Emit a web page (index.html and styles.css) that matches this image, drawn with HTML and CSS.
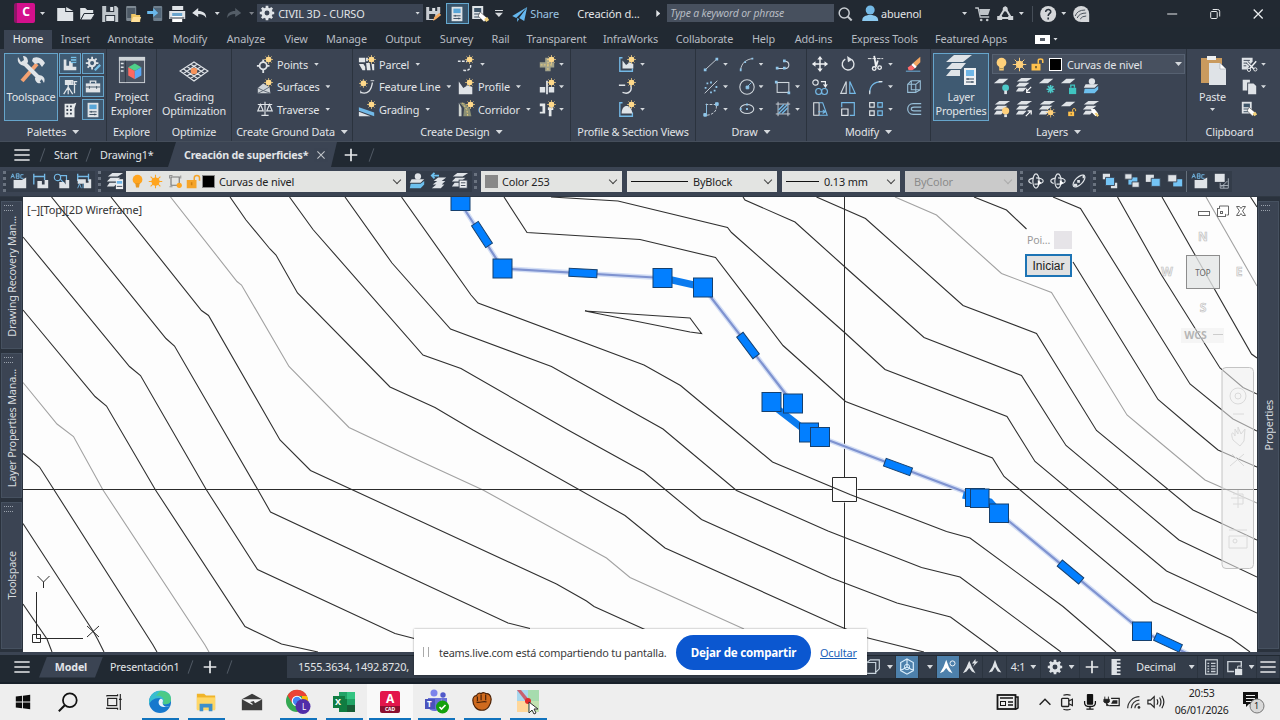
FILE: index.html
```html
<!DOCTYPE html>
<html lang="es">
<head>
    <meta charset="UTF-8">
    <meta name="viewport" content="width=device-width, initial-scale=1.0">
    <title>Civil 3D</title>
    <link rel="stylesheet" href="styles.css">
</head>
<body>
    <!-- Icon symbols -->
    <svg class="defs">
        <symbol id="new" viewBox="0 0 20 20"><path d="M2 4h8v4h8v9H2z M11 3l7 4h-7z" fill="#dfe3e7"/></symbol>
        <symbol id="open" viewBox="0 0 20 20"><path d="M3 16V4h5l2 2h6v3H7z" fill="#dfe3e7"/><path d="M7 9.500h11L14 16H3.500z" fill="#dfe3e7" stroke="#222933"/></symbol>
        <symbol id="save" viewBox="0 0 20 20"><path d="M2 2h14l2 2v14H2z" fill="#bfc5ca"/><path d="M6 2h8v6H6zM5 11h10v7H5z" fill="#2a323c"/><path d="M10 3h3v4h-3zM6 12h8v5H6z" fill="#dfe3e7"/></symbol>
        <symbol id="openm" viewBox="0 0 20 20"><rect x="4" y="2" width="10" height="15" rx="1" fill="#7e8993"/><rect x="5" y="4" width="8" height="10" fill="#4d5965"/><path d="M9 10h4l1 1h4v7H9z" fill="#f0c765"/><path d="M11 13h8l-2 5H9z" fill="#ffe09a"/></symbol>
        <symbol id="savem" viewBox="0 0 20 20"><rect x="8" y="2" width="9" height="15" rx="1" fill="#6e7e8c"/><rect x="9" y="4" width="7" height="10" fill="#536779"/><path d="M2 7h6V4l5 5-5 4v-3H2z" fill="#69b7ea"/></symbol>
        <symbol id="print" viewBox="0 0 20 20"><path d="M5 2h11v4H5zM2 7h16v8H2z" fill="#dfe3e7"/><path d="M5 11h10v7H5z" fill="#fff"/><path d="M5 9h10v3H5z" fill="#6aa4cc"/><path d="M3 14h14" stroke="#2a323c"/></symbol>
        <symbol id="undo" viewBox="0 0 20 20"><path d="M9 4L3 9l6 4v-3c4 0 6 1 8 4 0-5-3-7-8-7z" fill="#dfe3e7"/></symbol>
        <symbol id="redo" viewBox="0 0 20 20"><path d="M11 4l6 5-6 4v-3c-4 0-6 1-8 4 0-5 3-7 8-7z" fill="#545d67"/></symbol>
        <symbol id="gear" viewBox="0 0 20 20"><circle cx="10" cy="10" r="4.500" fill="none" stroke="#dfe3e7" stroke-width="3.500"/><path d="M10 2v3M10 15v3M2 10h3M15 10h3M4.300 4.300l2 2M13.700 13.700l2 2M15.700 4.300l-2 2M6.300 13.700l-2 2" stroke="#dfe3e7" stroke-width="3"/></symbol>
        <symbol id="saveas" viewBox="0 0 20 20"><path d="M2 3h14v6l-6 7H2z" fill="#c9cdd2"/><path d="M5 3h8v4H5zM5 10h6v5H5z" fill="#29313b"/><path d="M8 4h3v3H8z" fill="#dfe3e7"/><path d="M9 17l1-4 5-4 2 2-5 4z" fill="#f2a85f"/></symbol>
        <symbol id="props" viewBox="0 0 20 20"><rect x="4" y="2" width="12" height="16" fill="#dfe3e7"/><rect x="6" y="4" width="8" height="5" fill="#58a6d8"/><path d="M6 12h8M6 15h8M8 11v2M12 14v2" stroke="#33475a"/></symbol>
        <symbol id="match" viewBox="0 0 20 20"><rect x="2" y="2" width="11" height="13" fill="#dfe3e7"/><rect x="4" y="4" width="7" height="4" fill="#3f566a"/><path d="M4 10h7M4 13h5" stroke="#33475a"/><path d="M10 8l7 6-3 4-6-6z" fill="#fff" stroke="#333" stroke-width=".6"/><path d="M14 15l3-2 2 3-3 2z" fill="#f4d27a"/></symbol>
        <symbol id="plane" viewBox="0 0 20 20"><path d="M18 3L3 12l4 2zM18 3l-3 14-5-3zM8 14v4l2-3z" fill="#65b7ee"/></symbol>
        <symbol id="search" viewBox="0 0 20 20"><circle cx="9" cy="9" r="5" fill="none" stroke="#c5cacf" stroke-width="1.500"/><path d="M12.500 12.500l4 4" stroke="#c5cacf" stroke-width="2"/></symbol>
        <symbol id="user" viewBox="0 0 20 20"><circle cx="10" cy="6" r="4.500" fill="#74b9e6"/><path d="M2 17c0-4 2-5 6-6h4c4 1 6 2 6 6z" fill="#8cc9ef"/></symbol>
        <symbol id="cart" viewBox="0 0 20 20"><path d="M2 4h3l2 9h9" fill="none" stroke="#bfc4c9" stroke-width="1.300"/><path d="M6 5h11l-2 6H7z" fill="#bfc4c9"/><circle cx="8" cy="16" r="1.300" fill="#bfc4c9"/><circle cx="14" cy="16" r="1.300" fill="#bfc4c9"/></symbol>
        <symbol id="adsk" viewBox="0 0 20 20"><path d="M10 4L4 14h12z" fill="none" stroke="#cfd3d7" stroke-width="2"/><circle cx="10" cy="5" r="2.500" fill="#cfd3d7"/><path d="M2 12h5v4H2zM13 12h5v4h-5z" fill="#cfd3d7"/></symbol>
        <symbol id="help" viewBox="0 0 20 20"><circle cx="10" cy="10" r="8" fill="#d5d7da"/><path d="M7.500 8c0-3.500 5.500-3 5 0-.3 1.500-2.500 1.500-2.500 4M10 13.500v2" fill="none" stroke="#2a323c" stroke-width="1.600"/></symbol>
        <symbol id="badge" viewBox="0 0 20 20"><path d="M18 18h-8A8 8 0 1 1 18 10z" fill="#d5d7da"/><path d="M4 12q2-6 10-6M6 14q2-5 9-5M9 15q2-3 6-3" fill="none" stroke="#4a525c"/></symbol>
        <symbol id="min" viewBox="0 0 20 20"><path d="M5 10h10" stroke="#e6e8ea"/></symbol>
        <symbol id="rest" viewBox="0 0 20 20"><rect x="5.500" y="7.500" width="6.500" height="7" rx="1" fill="none" stroke="#e6e8ea"/><path d="M7.500 5.500h5q2 0 2 2v5" fill="none" stroke="#e6e8ea"/></symbol>
        <symbol id="close" viewBox="0 0 20 20"><path d="M5.500 5.500l9 9M14.500 5.500l-9 9" stroke="#e6e8ea" stroke-width="1.300"/></symbol>
        <symbol id="burger" viewBox="0 0 20 20"><path d="M1.500 4.500h17M1.500 10h17M1.500 15.500h17" stroke="#e6e8ea" stroke-width="1.700"/></symbol>
        <symbol id="plus" viewBox="0 0 20 20"><path d="M3 10h14M10 3v14" stroke="#e6e8ea" stroke-width="1.900"/></symbol>

        <symbol id="star" viewBox="0 0 10 10"><path d="M5 0v10M0 5h10M1.500 1.500l7 7M8.500 1.500l-7 7" stroke="#f3cf86" stroke-width=".8"/><circle cx="5" cy="5" r="3.100" fill="#ffd98a"/></symbol>
        <symbol id="tools" viewBox="0 0 32 32"><path d="M7 27L22 10" stroke="#f4a272" stroke-width="4"/><path d="M18 4c5-2 9 0 12 5l-3 4-3-4-4 1-3-3z" fill="#dfe3e7"/><path d="M8 8l18 18" stroke="#dfe3e7" stroke-width="4"/><path d="M3 3c-1 5 1 8 7 9l3-4c0-4-2-6-5-6l1 4-3 2zM29 29c2-5-1-8-6-8l-3 3c0 4 3 6 6 5l-2-3 2-2z" fill="#dfe3e7"/></symbol>
        <symbol id="psp" viewBox="0 0 20 20"><path d="M3 5h3v7h3V7h4v6h4v4H3z" fill="#dfe3e7"/><path d="M11 2h6v7h-6z" fill="#76bfe6"/><path d="M11 4h6M11 7h6" stroke="#3b4f60"/></symbol>
        <symbol id="pset" viewBox="0 0 20 20"><circle cx="9" cy="9" r="3.500" fill="none" stroke="#dfe3e7" stroke-width="2.500"/><path d="M9 2v3M9 13v3M2 9h3M13 9h3M4 4l2 2M14 4l-2 2M6 12l-2 2" stroke="#dfe3e7" stroke-width="2"/><path d="M12 17l6-6" stroke="#76bfe6" stroke-width="2.500"/></symbol>
        <symbol id="survey" viewBox="0 0 20 20"><path d="M5 3h8v4H5zM15 4v13M8 7v4M8 10l-5 8M8 10l5 8M8 9v9M14 4h4M14 7h3" fill="none" stroke="#dfe3e7" stroke-width="1.400"/><path d="M5 3h7v4H5z" fill="#dfe3e7"/></symbol>
        <symbol id="case" viewBox="0 0 20 20"><path d="M7 6V3.500h6V6" fill="none" stroke="#dfe3e7" stroke-width="1.500"/><path d="M2 6h16v10H2z" fill="#dfe3e7"/><path d="M2 10h16M6 9v3M14 9v3" stroke="#3b4f60"/></symbol>
        <symbol id="panorama" viewBox="0 0 20 20"><path d="M4 3h10l3-1-2 6v10H4z" fill="#e7eaec"/><path d="M6 5h2v2H6zM10 5h2v2h-2zM6 9h2v2H6zM10 9h2v2h-2zM6 13h2v2H6zM10 13h2v2h-2z" fill="#3b4453"/></symbol>
        <symbol id="explorer" viewBox="0 0 30 30"><rect x="1.500" y="1.500" width="27" height="27" fill="#4b5462" stroke="#cfd4d8"/><path d="M1 1h28v4H1z" fill="#cfd4d8"/><path d="M3 8h3M3 12h3M3 16h3" stroke="#dfe3e7" stroke-width="1.500"/><path d="M8 5v23" stroke="#2e3744"/><path d="M18 8l7 4-7 4-7-4z" fill="#4fd08a"/><path d="M11 12l7 4v9l-7-4z" fill="#ff6961"/><path d="M25 12l-7 4v9l7-4z" fill="#5aa8f7"/></symbol>
        <symbol id="grade" viewBox="0 0 30 22"><path d="M15 1L29 10 15 20 1 10zM8 5.500L22 15M11.500 3L25.500 12.500M4.500 8L18.500 17.500M22 5.500L8 15M18.500 3L4.500 12.500M25.500 8L11.500 17.500" fill="none" stroke="#dfe3e7" stroke-width="1.200"/><circle cx="15" cy="10" r="3.300" fill="#f5925c"/></symbol>
        <symbol id="points" viewBox="0 0 20 20"><circle cx="8" cy="12" r="4" fill="none" stroke="#dfe3e7" stroke-width="2"/><path d="M8 5v3M8 16v4M1 12h3M12 12h3" stroke="#dfe3e7" stroke-width="2"/><use href="#star" x="9" y="0" width="10" height="10"/></symbol>
        <symbol id="surf" viewBox="0 0 20 20"><path d="M2 11l6-5 7 4 1 7H2z" fill="#cfd4d8"/><path d="M2 11l6 3 7-4M8 14l-6 3M8 14l8 3" stroke="#59636f" fill="none"/><use href="#star" x="9" y="0" width="10" height="10"/></symbol>
        <symbol id="trav" viewBox="0 0 20 20"><path d="M2 5h16M10 2v15M6 17h8M5 5l-3 7h6zM15 5l-3 7h6z" fill="none" stroke="#dfe3e7" stroke-width="1.300"/></symbol>
        <symbol id="parcel" viewBox="0 0 20 20"><path d="M1 3h7v5H1zM1 10h5l2 3v4H5zM9 9h4l1 8h-4zM15 10h3v7h-2zM9 3h2v4H9z" fill="#e4e7e9"/><use href="#star" x="10" y="0" width="10" height="10"/></symbol>
        <symbol id="fline" viewBox="0 0 20 20"><path d="M3 16c8 3 12-3 13-11" fill="none" stroke="#dfe3e7" stroke-width="1.500"/><path d="M14 3h4M3 14v3" stroke="#dfe3e7"/><use href="#star" x="1" y="1" width="10" height="10"/></symbol>
        <symbol id="gra" viewBox="0 0 20 20"><path d="M1 8l17 6v4L1 12z" fill="#71b9e8"/><path d="M1 13l13 5H1z" fill="#dfe3e7"/><use href="#star" x="10" y="0" width="10" height="10"/></symbol>
        <symbol id="align" viewBox="0 0 20 20"><path d="M1 7h10M7 17c6 1 9-2 8-7" fill="none" stroke="#dfe3e7" stroke-width="1.600" stroke-dasharray="3 1.500"/><use href="#star" x="9" y="0" width="10" height="10"/></symbol>
        <symbol id="profile" viewBox="0 0 20 20"><path d="M2 4l5 7 5-3 5 2v8H2z" fill="#dfe3e7"/><use href="#star" x="9" y="0" width="10" height="10"/></symbol>
        <symbol id="corr" viewBox="0 0 20 20"><path d="M3 3h5l6 6 2 9H7L8 9z" fill="#8b9075"/><path d="M2 3l3 6v9H2z" fill="#cfd4d0"/><path d="M6 3l5 8 1 7" fill="none" stroke="#f4d27a" stroke-dasharray="2 1.500"/><use href="#star" x="10" y="0" width="10" height="10"/></symbol>
        <symbol id="inter" viewBox="0 0 20 20"><path d="M8 3h6v5h4v6h-4v4H8v-4H2V8h6z" fill="#a3a38b"/><path d="M3 11h14M11 4v14" stroke="#f4d27a" stroke-dasharray="2 1.500"/><use href="#star" x="10" y="0" width="10" height="10"/></symbol>
        <symbol id="assem" viewBox="0 0 20 20"><path d="M2 10h6v6H2zM12 10h6v6h-6z" fill="#dfe3e7"/><path d="M10 3v15" stroke="#dfe3e7" stroke-width="2"/><use href="#star" x="10" y="0" width="10" height="10"/></symbol>
        <symbol id="pipe" viewBox="0 0 20 20"><path d="M2 4h6v11H2v-2h3V7H2zM11 8h6v3h-2v7h-3v-7h-1z" fill="#e4e7e9"/><use href="#star" x="10" y="0" width="10" height="10"/></symbol>
        <symbol id="pview" viewBox="0 0 20 20"><path d="M5 3H2v15h14v-3" fill="none" stroke="#74b9e6" stroke-width="1.500"/><path d="M5 6l4 5 4-3 4 2v5H5z" fill="#dfe3e7"/><use href="#star" x="10" y="0" width="10" height="10"/></symbol>
        <symbol id="sline" viewBox="0 0 20 20"><path d="M1 8h7M5 16c8 3 11-3 9-8" fill="none" stroke="#dfe3e7" stroke-width="1.600"/><use href="#star" x="10" y="0" width="10" height="10"/></symbol>
        <symbol id="sview" viewBox="0 0 20 20"><path d="M5 3H2v15h14v-4" fill="none" stroke="#74b9e6" stroke-width="1.500"/><path d="M4 15c0-11 11-11 12 0z" fill="#dfe3e7"/><use href="#star" x="10" y="0" width="10" height="10"/></symbol>

        <symbol id="line" viewBox="0 0 20 20"><path d="M4 16L17 4" stroke="#cfd6dc"/><path d="M2 15h3v3H2zM15 3h3v3h-3z" fill="#8fc6ea"/></symbol>
        <symbol id="arc" viewBox="0 0 20 20"><path d="M3 16C4 9 9 5 16 4" fill="none" stroke="#cfd6dc"/><path d="M2 15h2v3H2zM7 7h2v2H7zM15 3h2v2h-2z" fill="#8fc6ea"/></symbol>
        <symbol id="pline" viewBox="0 0 20 20"><path d="M3 15h9c6 0 6-8 0-8" fill="none" stroke="#cfd6dc" stroke-width="1.200"/><path d="M2 13h3v3H2zM10 13h3v3h-3zM10 5h3v3h-3z" fill="#8fc6ea"/></symbol>
        <symbol id="pts" viewBox="0 0 20 20"><path d="M3 17L17 3" stroke="#cfd6dc"/><path d="M5 5h2v2H5zM9 4h2v2H9zM3 10h2v2H3zM13 13h2v2h-2zM9 15h2v2H9zM15 9h2v2h-2z" fill="#8fc6ea"/></symbol>
        <symbol id="circle" viewBox="0 0 20 20"><circle cx="10" cy="10" r="8" fill="none" stroke="#cfd6dc" stroke-width="1.200"/><path d="M10 10l5-5M9 9h3v3H9z" stroke="#8fc6ea" fill="#8fc6ea"/></symbol>
        <symbol id="rect" viewBox="0 0 20 20"><rect x="3.500" y="5" width="13" height="11" fill="none" stroke="#cfd6dc" stroke-width="1.200"/><path d="M1 3h3v3H1zM15 15h3v3h-3z" fill="#8fc6ea"/></symbol>
        <symbol id="curve" viewBox="0 0 20 20"><path d="M4 5h12v3c0 5-5 9-12 9" fill="none" stroke="#cfd6dc" stroke-dasharray="3 1.500"/><path d="M15 3h3v3h-3zM2 15h3v3H2zM5 4v11" fill="#8fc6ea" stroke="#8fc6ea"/></symbol>
        <symbol id="ell" viewBox="0 0 20 20"><ellipse cx="10" cy="10" rx="7.500" ry="5" fill="none" stroke="#cfd6dc" stroke-width="1.200"/><path d="M9 9h2v2H9zM2 9h2v2H2zM9 4h2v2H9z" fill="#8fc6ea"/></symbol>
        <symbol id="hatch" viewBox="0 0 20 20"><path d="M2 4.500h16M2 15.500h16M4.500 2v16M15.500 2v16" stroke="#cfd6dc"/><path d="M5 11l6-6M5 15L15 5M9 15l6-6" stroke="#74b9e6" stroke-width="1.500"/></symbol>
        <symbol id="move" viewBox="0 0 20 20"><path d="M10 3v14M3 10h14" stroke="#eef0f2" stroke-width="1.600"/><path d="M10 1l3 4H7zM10 19l3-4H7zM1 10l4-3v6zM19 10l-4-3v6z" fill="#eef0f2"/></symbol>
        <symbol id="rot" viewBox="0 0 20 20"><path d="M7 4.500A6.500 6.500 0 1 0 14 5" fill="none" stroke="#dfe3e7" stroke-width="1.500"/><path d="M9 1l6 4-5 3z" fill="#dfe3e7"/></symbol>
        <symbol id="trim" viewBox="0 0 20 20"><path d="M1 4h17" stroke="#eef0f2" stroke-dasharray="4 1"/><path d="M8 1l2 12M12 6l-2 7" stroke="#eef0f2" stroke-width="2"/><circle cx="8" cy="15" r="2" fill="none" stroke="#eef0f2" stroke-width="1.500"/><circle cx="14" cy="14" r="2" fill="none" stroke="#eef0f2" stroke-width="1.500"/></symbol>
        <symbol id="erase" viewBox="0 0 20 20"><path d="M9 9l8-7v6l-5 5z" fill="#f4a763"/><path d="M9 9l4 4-2 2-4-4z" fill="#fff"/><path d="M3 14l4-3 4 4-3 2H4z" fill="#ff6b6b"/><path d="M1 18h16" stroke="#74b9e6"/></symbol>
        <symbol id="copy" viewBox="0 0 20 20"><circle cx="5" cy="5" r="3" fill="none" stroke="#dfe3e7" stroke-width="1.300"/><circle cx="8.500" cy="15" r="3.300" fill="none" stroke="#74b9e6" stroke-width="1.300"/><circle cx="15" cy="15" r="3.300" fill="none" stroke="#74b9e6" stroke-width="1.300"/><path d="M11 4h5v5M14 7l2 3 2-3" fill="none" stroke="#eef0f2" stroke-width="1.300"/></symbol>
        <symbol id="mirror" viewBox="0 0 20 20"><path d="M8 4v13H2z" fill="none" stroke="#cfd6dc" stroke-width="1.300"/><path d="M12 4v13h6z" fill="none" stroke="#74b9e6" stroke-width="1.300"/></symbol>
        <symbol id="fillet" viewBox="0 0 20 20"><path d="M3 17c0-8 4-13 14-13" fill="none" stroke="#74b9e6" stroke-width="1.300"/><path d="M3 18v-4M13 4h4" stroke="#dfe3e7" stroke-width="1.300"/></symbol>
        <symbol id="box" viewBox="0 0 20 20"><path d="M3 7h9v9H3zM7 3h10v10M3 7l4-4M12 7l5-4M12 16l5-3M7 3v10h10" fill="none" stroke="#98bfd8" stroke-width="1.200"/></symbol>
        <symbol id="stretch" viewBox="0 0 20 20"><path d="M3 3h6v14H3z" fill="none" stroke="#dfe3e7" stroke-width="1.200"/><path d="M9 3h4l5 14H9M8 13h7M13 11l3 2-3 2" fill="none" stroke="#74b9e6" stroke-width="1.200"/></symbol>
        <symbol id="scale" viewBox="0 0 20 20"><path d="M3 10h7v7H3z" fill="none" stroke="#dfe3e7" stroke-width="1.300"/><path d="M3 8V3h14v14h-5" fill="none" stroke="#74b9e6" stroke-width="1.300"/></symbol>
        <symbol id="array" viewBox="0 0 20 20"><path d="M3 3h5v5H3zM3 12h5v5H3z" fill="none" stroke="#dfe3e7" stroke-width="1.300"/><path d="M12 3h5v5h-5zM12 12h5v5h-5z" fill="none" stroke="#74b9e6" stroke-width="1.300"/></symbol>
        <symbol id="offset" viewBox="0 0 20 20"><path d="M18 4H9c-8 0-8 12 0 12h9M18 8h-8c-4 0-4 4 0 4h8" fill="none" stroke="#98bfd8" stroke-width="1.300"/></symbol>

        <symbol id="lprops" viewBox="0 0 32 32"><path d="M9 1h18l-9 7H1zM7 9h14l-5 6H1zM6 16h9v6H1z" fill="#dfe3e7"/><path d="M19 14h12v17H19z" fill="#eef0f2"/><path d="M21 16h8v6h-8z" fill="#6fb6e6"/><path d="M21 25h8M21 28h8M23 24v2M27 27v2" stroke="#35485a"/></symbol>
        <symbol id="bulb" viewBox="0 0 20 20"><circle cx="10" cy="7.500" r="6.500" fill="#ffd07a"/><path d="M7 12h6v6H7z" fill="#ffd07a"/><path d="M7.500 15.500h5" stroke="#8a7a4c"/></symbol>
        <symbol id="sun" viewBox="0 0 20 20"><circle cx="10" cy="10" r="5" fill="#ffd07a"/><path d="M10 1v18M1 10h18M3.500 3.500l13 13M16.500 3.500l-13 13" stroke="#ffd07a" stroke-width="1.300"/></symbol>
        <symbol id="lock" viewBox="0 0 20 20"><path d="M11 9V5c0-3 6-3 6 0v3" fill="none" stroke="#ffc14d" stroke-width="2"/><rect x="2" y="9" width="12" height="9" fill="#ffc14d"/><path d="M8 12v3" stroke="#5a4b28" stroke-width="2"/></symbol>
        <symbol id="bulbo" viewBox="0 0 20 20"><circle cx="10" cy="7.500" r="6.500" fill="#ffa51f"/><path d="M7 12h6l-1 6H8z" fill="#e8971f"/></symbol>
        <symbol id="suno" viewBox="0 0 20 20"><circle cx="10" cy="10" r="5.500" fill="#ffa51f"/><path d="M10 1v18M1 10h18M3.500 3.500l13 13M16.500 3.500l-13 13" stroke="#ffa51f" stroke-width="1.400"/></symbol>
        <symbol id="vpo" viewBox="0 0 20 20"><path d="M4 4h11v11H4z" fill="none" stroke="#777" stroke-width="1.500"/><path d="M2 2h4M2 2v4M17 2v4M2 17h4" stroke="#777"/><circle cx="15" cy="15" r="3.500" fill="#ffa51f"/></symbol>
        <symbol id="locko" viewBox="0 0 20 20"><path d="M11 9V5c0-4 7-4 7 0v4" fill="none" stroke="#f5a42a" stroke-width="2"/><rect x="1" y="8" width="13" height="11" fill="#f5a42a"/><path d="M7.500 11v4" stroke="#cf7f10" stroke-width="2"/></symbol>
        <symbol id="lay" viewBox="0 0 20 20"><path d="M7 1h12l-6 4H2zM5 6.500h11l-5 4H1zM4 12h9l-4 4H1z" fill="#dfe3e7"/></symbol>
        <symbol id="lay1" viewBox="0 0 20 20"><path d="M7 2h10l-6 5H1z" fill="#dfe3e7"/></symbol>
        <symbol id="lOff" viewBox="0 0 20 20"><use href="#lay1"/><circle cx="14" cy="12" r="3.800" fill="#4cc9c9"/><path d="M12.500 15h3v4h-3z" fill="#dfe3e7"/></symbol>
        <symbol id="lIso" viewBox="0 0 20 20"><use href="#lay"/><path d="M18 11l-5 5M13 13v4h4" fill="none" stroke="#fff" stroke-width="1.300"/></symbol>
        <symbol id="lFrz" viewBox="0 0 20 20"><use href="#lay1"/><path d="M14 9v9M9.500 13.500h9M11 10l6 7M17 10l-6 7" stroke="#4cc9c9" stroke-width="1.700"/></symbol>
        <symbol id="lLck" viewBox="0 0 20 20"><use href="#lay1"/><path d="M10 12h8v7h-8z" fill="#3fc4c0"/><path d="M12 12V9h4v3" fill="none" stroke="#3fc4c0" stroke-width="1.500"/></symbol>
        <symbol id="lCur" viewBox="0 0 20 20"><path d="M4 8h14l-4 4H2z" fill="#dfe3e7"/><path d="M3 13h11l4-3v4l-4 4H2z" fill="#6dc0ee"/><circle cx="11" cy="5" r="3.500" fill="#dfe3e7"/></symbol>
        <symbol id="lOn" viewBox="0 0 20 20"><use href="#lay"/><circle cx="14" cy="12" r="4" fill="#ffd07a"/><path d="M12.500 16h3v3h-3z" fill="#dfe3e7"/></symbol>
        <symbol id="lUn" viewBox="0 0 20 20"><use href="#lay"/><path d="M12 18l5-5M14 12h4v4" fill="none" stroke="#fff" stroke-width="1.300"/></symbol>
        <symbol id="lThw" viewBox="0 0 20 20"><use href="#lay"/><use href="#sun" x="8" y="8" width="12" height="12"/></symbol>
        <symbol id="lUlk" viewBox="0 0 20 20"><use href="#lay1"/><use href="#lock" x="8" y="8" width="11" height="11"/></symbol>
        <symbol id="lMat" viewBox="0 0 20 20"><use href="#lay"/><path d="M10 10l4 0 4 5-3 3-4-4z" fill="#fff"/><path d="M14 15l2-1 3 3-2 2z" fill="#f4d27a"/></symbol>
        <symbol id="lPrev" viewBox="0 0 20 20"><path d="M9 6h9l-5 4H4zM8 10h9l-4 4H3zM7 14h9l-4 4H2z" fill="#dfe3e7"/><path d="M2 4h8M5 1L2 4l3 3" fill="none" stroke="#6dc0ee" stroke-width="2"/></symbol>
        <symbol id="lSt" viewBox="0 0 20 20"><use href="#lay"/><rect x="9" y="9" width="9" height="9" fill="#eef0f2" stroke="#3b4453"/><path d="M11 12h5M11 15h5" stroke="#3b4453"/></symbol>
        <symbol id="paste" viewBox="0 0 28 32"><rect x="2" y="4" width="21" height="25" fill="#c99a5e"/><path d="M8 2h9v4H8z" fill="#eef0f2"/><path d="M10 9h11l6 6v16H10z" fill="#dfe3e7"/><path d="M21 9v6h6z" fill="#fff" stroke="#8b929a" stroke-width=".5"/></symbol>
        <symbol id="cut" viewBox="0 0 20 20"><path d="M2 3h12v4l-6 9H2z" fill="#dfe3e7"/><path d="M4 6h7M4 9h4M4 12h3" stroke="#3b4453"/><path d="M8 8l8 8M18 7l-8 9" stroke="#3b4453" stroke-width="3"/><path d="M8 8l8 8M18 7l-8 9" stroke="#eef0f2" stroke-width="1.600"/><circle cx="10" cy="16.500" r="1.800" fill="#3b4453" stroke="#eef0f2"/><circle cx="17" cy="16" r="1.800" fill="#3b4453" stroke="#eef0f2"/></symbol>
        <symbol id="cpy" viewBox="0 0 20 20"><path d="M3 2h8v3H8v9H3z" fill="#dfe3e7"/><path d="M9 6h6l3 3v9H9z" fill="#dfe3e7"/></symbol>

        <symbol id="t1" viewBox="0 0 20 20"><path d="M4 9h9l5-3v12H4z" fill="#dfe3e7"/><path d="M1 7l2-5 2 5M2 5h2M7 2v5h3V2zM7 4.500h3M15 3h-3v4h3" fill="none" stroke="#74b9e6"/></symbol>
        <symbol id="t2" viewBox="0 0 20 20"><path d="M2 2v12M14 2v7M2 5h12" stroke="#74b9e6" stroke-width="1.500"/><path d="M6 10h5v4h3V9h4v9H6z" fill="#dfe3e7"/></symbol>
        <symbol id="t3" viewBox="0 0 20 20"><circle cx="5" cy="6" r="3.500" fill="none" stroke="#74b9e6" stroke-width="1.300"/><path d="M8 4h7v5M8 8l5 5" fill="none" stroke="#74b9e6" stroke-width="1.300"/><path d="M7 11h5l2 3V9h4v9H7z" fill="#dfe3e7"/></symbol>
        <symbol id="t4" viewBox="0 0 20 20"><path d="M3 2v8M15 2v8M3 5h12" stroke="#74b9e6" stroke-width="1.500"/><path d="M3 8h9v4h3V8h3v10h-8v-5H3z" fill="#dfe3e7"/><path d="M3 18l2-5 2 5M9 13v5" stroke="#74b9e6" fill="none"/></symbol>
        <symbol id="lp" viewBox="0 0 20 20"><use href="#lay"/><path d="M11 8h8v11h-8z" fill="#eef0f2"/><path d="M12 10h6v3h-6z" fill="#6fb6e6"/><path d="M12 16h6" stroke="#3b4453"/></symbol>
        <symbol id="orb" viewBox="0 0 20 20"><ellipse cx="10" cy="10" rx="3.500" ry="8" fill="none" stroke="#dfe3e7" stroke-width="1.300"/><ellipse cx="10" cy="10" rx="8" ry="3.500" fill="none" stroke="#dfe3e7" stroke-width="1.300" stroke-dasharray="11 3"/><path d="M12 9l4 3-4 3z" fill="#fff"/></symbol>
        <symbol id="orb2" viewBox="0 0 20 20"><ellipse cx="10" cy="10" rx="8.500" ry="4" transform="rotate(-45 10 10)" fill="none" stroke="#dfe3e7" stroke-width="1.300"/><path d="M8 9h3v3H8zM14 3h2v4h-2zM4 13h4v3H4z" fill="#dfe3e7"/></symbol>
        <symbol id="do1" viewBox="0 0 20 20"><path d="M2 2h8v6H2zM11 12h7v6h-7z" fill="#dfe3e7"/><path d="M5 6h10v9H5z" fill="#74c4f5" stroke="#3b4453"/></symbol>
        <symbol id="do2" viewBox="0 0 20 20"><path d="M6 6h10v8H6z" fill="#74c4f5"/><path d="M2 2h8v6H2zM10 11h8v6h-8z" fill="#dfe3e7" stroke="#3b4453"/></symbol>
        <symbol id="do3" viewBox="0 0 20 20"><path d="M2 3h9v8H2z" fill="#dfe3e7"/><path d="M8 7h10v9H8z" fill="#74c4f5" stroke="#3b4453"/></symbol>
        <symbol id="do4" viewBox="0 0 20 20"><path d="M8 8h10v8H8z" fill="#74c4f5"/><path d="M2 3h10v8H2z" fill="#dfe3e7" stroke="#3b4453"/></symbol>
        <symbol id="do5" viewBox="0 0 20 20"><path d="M2 2h11v9H2z" fill="#dfe3e7"/><path d="M8 12v6h9V7M9 17l7-7M12 18v-4M8 15h9" fill="none" stroke="#aeb6bf"/></symbol>

        <symbol id="cube" viewBox="0 0 20 20"><path d="M10 1l7 4v9l-7 4-7-4V5zM10 1v9M10 10l-7 4M10 10l7 4" fill="none" stroke="#dbeefc" stroke-width="1.300"/><circle cx="10" cy="10" r="3" fill="none" stroke="#dbeefc"/></symbol>
        <symbol id="osn" viewBox="0 0 20 20"><path d="M3 5h10v12H3zM3 5l4-3h10v10l-4 4" fill="none" stroke="#c9d4dd" stroke-width="1.300"/></symbol>
        <symbol id="ann" viewBox="0 0 20 20"><path d="M10 2l3 8 4 6-4-1-3-5-3 5-4 1 4-6z" fill="#dfe3e7"/></symbol>
        <symbol id="ann1" viewBox="0 0 20 20"><path d="M8 2l3 8 4 7-4-2-3-4-3 4-4 2 4-7z" fill="#fff"/><circle cx="15" cy="6" r="2.800" fill="none" stroke="#fff"/></symbol>
        <symbol id="ann2" viewBox="0 0 20 20"><path d="M8 3l3 7 4 7-4-2-3-4-3 4-4 2 4-7z" fill="#dfe3e7"/><path d="M15 1l-4 5h3l-2 4 6-6h-3z" fill="#dfe3e7"/></symbol>
        <symbol id="ruler" viewBox="0 0 20 20"><path d="M5 1h10v2h-4v2h4v2h-4v2h4v2h-4v2h4v2h-4v2h4v2H5z" fill="#dfe3e7"/></symbol>
        <symbol id="qp" viewBox="0 0 20 20"><rect x="4" y="2" width="13" height="16" fill="none" stroke="#c9d0d6" stroke-width="1.300"/><path d="M6 6h2M6 9h2M6 12h2M6 15h2M10 6h5M10 9h5M10 12h5M10 15h5" stroke="#c9d0d6" stroke-width="1.400"/></symbol>
        <symbol id="lui" viewBox="0 0 20 20"><path d="M9 15H2V4h15v5" fill="none" stroke="#c9d0d6" stroke-width="1.500"/><path d="M10 12h8v7h-8z" fill="#dfe3e7"/><path d="M13 12V9h4v2" fill="none" stroke="#dfe3e7"/></symbol>

        <symbol id="win" viewBox="0 0 20 20"><path d="M2 4l7-1v6.500H2zM10 3l8-1v7.500h-8zM2 10.500h7V17l-7-1zM10 10.500h8V18l-8-1z" fill="#0d0d0d"/></symbol>
        <symbol id="wsearch" viewBox="0 0 24 24"><circle cx="14" cy="10" r="7.500" fill="none" stroke="#111" stroke-width="1.900"/><path d="M8.500 15.500L2 22" stroke="#111" stroke-width="2.200"/></symbol>
        <symbol id="task" viewBox="0 0 20 20"><rect x="3" y="6" width="10" height="8" fill="none" stroke="#222" stroke-width="1.300"/><path d="M2 4V2.500M2 3h12V1.500M2 16v1h12v1.500M17 1v18M15.500 7h3" fill="none" stroke="#222" stroke-width="1.300"/></symbol>
        <symbol id="edge" viewBox="0 0 24 24"><circle cx="12" cy="12" r="11" fill="#1778cd"/><path d="M1 11C3-3 23-2 23 9c0 5-5 6-9 5 2-2 1-6-3-6C6 8 2 11 1 15z" fill="#38bdd0"/><path d="M12 1c8 0 11 4 11 8 0 5-5 6-8 5 3-8-4-9-7-8z" fill="#55d066" opacity=".7"/><path d="M12 9c-3 3-1 8 4 8 3 0 5 0 6-1-3 2-9 0-7-5 0-1-1-3-3-2z" fill="#eaf4fb"/></symbol>
        <symbol id="folder" viewBox="0 0 24 24"><path d="M2 3h8l2 2h10v15H2z" fill="#f0b429"/><path d="M2 7h20v14H2z" fill="#ffd766"/><path d="M5 14h14v8h-4v-4H9v4H5z" fill="#3e8fcb"/></symbol>
        <symbol id="mail" viewBox="0 0 26 20"><path d="M2 7l11-6 11 6v12H2z" fill="#3c3c3c"/><path d="M2 7h22l-11 6z" fill="#f2f2f2"/><path d="M11 10l7 5-3-6z" fill="#3c3c3c"/></symbol>
        <symbol id="chrome" viewBox="0 0 26 26"><circle cx="12" cy="12" r="11" fill="#34a853"/><path d="M2.500 6.500A11 11 0 0 1 22 7H12L7 14z" fill="#ea4335"/><path d="M22 7a11 11 0 0 1-10 16l5-8V7z" fill="#fbbc05"/><circle cx="12" cy="12" r="5.300" fill="#fff"/><circle cx="12" cy="12" r="4.200" fill="#4285f4"/><circle cx="18" cy="17.500" r="7.500" fill="#512da8"/></symbol>
        <symbol id="excel" viewBox="0 0 24 22"><path d="M7 1h16v20H7z" fill="#21a366"/><path d="M15 1h8v7h-8z" fill="#33c481"/><path d="M7 8h8v13H7z" fill="#107c41"/><path d="M15 14h8v7h-8z" fill="#185c37"/><rect x="1" y="5" width="12" height="12" fill="#107c41"/></symbol>
        <symbol id="teams" viewBox="0 0 26 26"><circle cx="11" cy="4" r="3.500" fill="#7b83eb"/><circle cx="20" cy="6" r="2.700" fill="#5059c9"/><path d="M5 9h13v8c0 6-11 7-13 1zM18 9h6v7h-5z" fill="#6971d8"/><rect x="2" y="10" width="10" height="10" fill="#4b53bc"/><circle cx="19.500" cy="18" r="6.500" fill="#13a10e"/><path d="M16.500 18l2 2 4-4" fill="none" stroke="#fff" stroke-width="1.600"/></symbol>
        <symbol id="fist" viewBox="0 0 24 22"><path d="M2 9c0-3 2-5 4-5 1-3 4-3 5-2 2-2 5-1 5 0 3-1 6 2 6 6 0 6-4 12-10 12S2 15 2 9z" fill="#cf6a1e" stroke="#4a2208" stroke-width="1.300"/><path d="M7 5v5M11 3v6M16 3v6M6 11c4 2 7-2 11 0" fill="none" stroke="#4a2208" stroke-width="1.300"/></symbol>
        <symbol id="pointer" viewBox="0 0 26 26"><path d="M2 1h11v11H2z" fill="#a8d8ef"/><path d="M13 1h11v11H13z" fill="#a6dcae"/><path d="M2 12h11v11H2z" fill="#ffd79a"/><path d="M13 12h11v11H13z" fill="#c3e3b1"/><path d="M2 1h4l9 11-3 2z" fill="#c8606f"/><circle cx="13" cy="12" r="3" fill="#e02b2b"/><path d="M14 13v11l3-3 2 4 2-1-2-4h4z" fill="#fff" stroke="#333"/></symbol>
        <symbol id="news" viewBox="0 0 24 18"><rect x="1.500" y="2" width="18" height="14" fill="none" stroke="#161616" stroke-width="1.800"/><path d="M20 4h2v11q-1 1-3 1" fill="none" stroke="#161616" stroke-width="1.500"/><path d="M4 5h13M12 9h5M12 12h5" stroke="#161616" stroke-width="1.500"/><rect x="4.500" y="8.500" width="5" height="4" fill="none" stroke="#161616"/></symbol>
        <symbol id="chev" viewBox="0 0 20 20"><path d="M4 13l6-6 6 6" fill="none" stroke="#222" stroke-width="1.600"/></symbol>
        <symbol id="cam" viewBox="0 0 20 20"><rect x="4" y="6" width="8" height="9" rx="1" fill="none" stroke="#222" stroke-width="1.500"/><path d="M12 9l4-2v7l-4-2M6 2.500q4-1.500 8 0M6 18q4 1.500 8 0" fill="none" stroke="#222" stroke-width="1.300"/></symbol>
        <symbol id="mic" viewBox="0 0 20 20"><rect x="6.500" y="1" width="7" height="12" rx="1" fill="#111"/><path d="M4 9v2q0 4 6 4t6-4V9M10 15v3M6 18h8" fill="none" stroke="#111" stroke-width="1.400"/></symbol>
        <symbol id="bat" viewBox="0 0 20 20"><path d="M9 6h9v8H7" fill="none" stroke="#222" stroke-width="1.400"/><path d="M11 8h5v4h-7z" fill="#222"/><path d="M2 4v4M6 4v4M1 7h6v3q-3 3-6 0zM4 11v3h3" fill="#222" stroke="#222"/></symbol>
        <symbol id="wifi" viewBox="0 0 20 20"><path d="M3 17C3 10 9 4 16 4M7 17c0-5 4-9 9-9M11 17c0-3 2-5 5-5" fill="none" stroke="#333" stroke-width="1.300"/><circle cx="15.500" cy="16" r="1.500" fill="#333"/></symbol>
        <symbol id="vol" viewBox="0 0 20 20"><path d="M1 8h3l4-4v12l-4-4H1z" fill="none" stroke="#222" stroke-width="1.300"/><path d="M11 7q2 3 0 6M14 5q3 5 0 10M16.500 3q4.500 7 0 14" fill="none" stroke="#222" stroke-width="1.300"/></symbol>
        <symbol id="note" viewBox="0 0 24 24"><path d="M2 2h15v12H8l-3 3v-3H2z" fill="#111"/><path d="M5 5.500h9M5 8.500h9M5 11.500h6" stroke="#eee"/><circle cx="16" cy="16" r="7" fill="#d9d9d9" stroke="#777"/></symbol>
    </svg>

    <!-- Title bar -->
    <header class="titlebar">
        <span class="logo">C</span>
        <i class="caret"></i>
        <svg class="ic ml6"><use href="#new"/></svg>
        <svg class="ic"><use href="#open"/></svg>
        <svg class="ic"><use href="#save"/></svg>
        <svg class="ic"><use href="#openm"/></svg>
        <svg class="ic"><use href="#savem"/></svg>
        <svg class="ic"><use href="#print"/></svg>
        <svg class="ic"><use href="#undo"/></svg>
        <i class="caret"></i>
        <svg class="ic"><use href="#redo"/></svg>
        <i class="caret dim"></i>
        <div class="workspace"><svg class="i16"><use href="#gear"/></svg><span>CIVIL 3D - CURSO</span><i class="caret"></i></div>
        <svg class="ic"><use href="#saveas"/></svg>
        <span class="qa-on"><svg class="i18"><use href="#props"/></svg></span>
        <svg class="ic"><use href="#match"/></svg>
        <i class="caret bar ml2"></i>
        <svg class="ic ml2"><use href="#plane"/></svg>
        <span class="share">Share</span>
        <span class="docname">Creación d...</span>
        <i class="tri"></i>
        <span class="keyword">Type a keyword or phrase</span>
        <svg class="ic"><use href="#search"/></svg>
        <svg class="ic ml2"><use href="#user"/></svg>
        <span class="uname">abuenol</span>
        <i class="caret"></i>
        <svg class="ic ml2"><use href="#cart"/></svg>
        <svg class="ic"><use href="#adsk"/></svg>
        <i class="caret tight"></i>
        <i class="vsep"></i>
        <svg class="ic"><use href="#help"/></svg>
        <i class="caret tight"></i>
        <svg class="ic ml2"><use href="#badge"/></svg>
        <span class="winbtns">
            <svg class="ic"><use href="#min"/></svg>
            <svg class="ic"><use href="#rest"/></svg>
            <svg class="ic"><use href="#close"/></svg>
        </span>
    </header>

    <!-- Ribbon tabs -->
    <nav class="tabs">
        <span class="active">Home</span><span>Insert</span><span>Annotate</span><span>Modify</span><span>Analyze</span><span>View</span><span>Manage</span><span>Output</span><span>Survey</span><span>Rail</span><span>Transparent</span><span>InfraWorks</span><span>Collaborate</span><span>Help</span><span>Add-ins</span><span>Express Tools</span><span>Featured Apps</span>
        <b class="pill"></b><i class="caret"></i>
    </nav>

    <!-- Ribbon -->
    <section class="ribbon">
        <div class="panel palettes">
            <div class="body">
                <div class="big on"><svg><use href="#tools"/></svg><span>Toolspace</span></div>
                <div class="minis">
                    <b class="on"><svg class="i18"><use href="#psp"/></svg></b><b class="on"><svg class="i18"><use href="#pset"/></svg></b>
                    <b class="on"><svg class="i18"><use href="#survey"/></svg></b><b class="on"><svg class="i18"><use href="#case"/></svg></b>
                    <b><svg class="i18"><use href="#panorama"/></svg></b><b class="on"><svg class="i18"><use href="#props"/></svg></b>
                </div>
            </div>
            <h4>Palettes<i class="down"></i></h4>
        </div>
        <div class="panel explore">
            <div class="body"><div class="big"><svg><use href="#explorer"/></svg><span>Project<br>Explorer</span></div></div>
            <h4>Explore</h4>
        </div>
        <div class="panel optimize">
            <div class="body"><div class="big"><svg><use href="#grade"/></svg><span>Grading<br>Optimization</span></div></div>
            <h4>Optimize</h4>
        </div>
        <div class="panel ground">
            <div class="body rows">
                <p><svg class="i16"><use href="#points"/></svg>Points<i class="caret"></i></p>
                <p><svg class="i16"><use href="#surf"/></svg>Surfaces<i class="caret"></i></p>
                <p><svg class="i16"><use href="#trav"/></svg>Traverse<i class="caret"></i></p>
            </div>
            <h4>Create Ground Data<i class="down"></i></h4>
        </div>
        <div class="panel design">
            <div class="body">
                <div class="rows">
                    <p><svg class="i16"><use href="#parcel"/></svg>Parcel<i class="caret"></i></p>
                    <p><svg class="i16"><use href="#fline"/></svg>Feature Line<i class="caret"></i></p>
                    <p><svg class="i16"><use href="#gra"/></svg>Grading<i class="caret"></i></p>
                </div>
                <div class="rows">
                    <p class="bare"><svg class="i16"><use href="#align"/></svg><i class="caret"></i></p>
                    <p><svg class="i16"><use href="#profile"/></svg>Profile<i class="caret"></i></p>
                    <p><svg class="i16"><use href="#corr"/></svg>Corridor<i class="caret"></i></p>
                </div>
                <div class="rows">
                    <p class="bare"><svg class="i16"><use href="#inter"/></svg><i class="caret"></i></p>
                    <p class="bare"><svg class="i16"><use href="#assem"/></svg><i class="caret"></i></p>
                    <p class="bare"><svg class="i16"><use href="#pipe"/></svg><i class="caret"></i></p>
                </div>
            </div>
            <h4>Create Design<i class="down"></i></h4>
        </div>
        <div class="panel views">
            <div class="body rows">
                <p class="bare"><svg class="i16"><use href="#pview"/></svg><i class="caret"></i></p>
                <p class="bare"><svg class="i16"><use href="#sline"/></svg></p>
                <p class="bare"><svg class="i16"><use href="#sview"/></svg><i class="caret"></i></p>
            </div>
            <h4>Profile &amp; Section Views</h4>
        </div>
        <div class="panel draw">
            <div class="body icons">
                <p><svg class="i16"><use href="#line"/></svg><i class="caret"></i></p><p><svg class="i16"><use href="#arc"/></svg><i class="caret"></i></p><p><svg class="i16"><use href="#pline"/></svg></p>
                <p><svg class="i16"><use href="#pts"/></svg><i class="caret"></i></p><p><svg class="i16"><use href="#circle"/></svg><i class="caret"></i></p><p><svg class="i16"><use href="#rect"/></svg><i class="caret"></i></p>
                <p><svg class="i16"><use href="#curve"/></svg><i class="caret"></i></p><p><svg class="i16"><use href="#ell"/></svg><i class="caret"></i></p><p><svg class="i16"><use href="#hatch"/></svg><i class="caret"></i></p>
            </div>
            <h4>Draw<i class="down"></i></h4>
        </div>
        <div class="panel modify">
            <div class="body icons">
                <p><svg class="i16"><use href="#move"/></svg></p><p><svg class="i16"><use href="#rot"/></svg></p><p><svg class="i16"><use href="#trim"/></svg><i class="caret"></i></p><p><svg class="i16"><use href="#erase"/></svg></p>
                <p><svg class="i16"><use href="#copy"/></svg></p><p><svg class="i16"><use href="#mirror"/></svg></p><p><svg class="i16"><use href="#fillet"/></svg><i class="caret"></i></p><p><svg class="i16"><use href="#box"/></svg></p>
                <p><svg class="i16"><use href="#stretch"/></svg></p><p><svg class="i16"><use href="#scale"/></svg></p><p><svg class="i16"><use href="#array"/></svg><i class="caret"></i></p><p><svg class="i16"><use href="#offset"/></svg></p>
            </div>
            <h4>Modify<i class="down"></i></h4>
        </div>
        <div class="panel layers">
            <div class="body">
                <div class="big on"><svg><use href="#lprops"/></svg><span>Layer<br>Properties</span></div>
                <div class="laycol">
                    <div class="laycombo"><svg class="i14"><use href="#bulb"/></svg><svg class="i14"><use href="#sun"/></svg><svg class="i14"><use href="#lock"/></svg><b class="swatch"></b><span>Curvas de nivel</span><i class="caret"></i></div>
                    <div class="layicons">
                        <svg class="i16"><use href="#lOff"/></svg><svg class="i16"><use href="#lIso"/></svg><svg class="i16"><use href="#lFrz"/></svg><svg class="i16"><use href="#lLck"/></svg><svg class="i16"><use href="#lCur"/></svg>
                        <svg class="i16"><use href="#lOn"/></svg><svg class="i16"><use href="#lUn"/></svg><svg class="i16"><use href="#lThw"/></svg><svg class="i16"><use href="#lUlk"/></svg><svg class="i16"><use href="#lMat"/></svg>
                    </div>
                </div>
            </div>
            <h4>Layers<i class="down"></i></h4>
        </div>
        <div class="panel clip">
            <div class="body">
                <div class="big"><svg><use href="#paste"/></svg><span>Paste</span><i class="caret"></i></div>
                <div class="rows">
                    <p class="bare"><svg class="i16"><use href="#cut"/></svg><i class="caret"></i></p>
                    <p class="bare"><svg class="i16"><use href="#cpy"/></svg><i class="caret"></i></p>
                    <p class="bare"><svg class="i16"><use href="#match"/></svg></p>
                </div>
            </div>
            <h4>Clipboard</h4>
        </div>
    </section>

    <!-- Drawing tabs -->
    <nav class="filetabs">
        <svg class="i18"><use href="#burger"/></svg>
        <i class="slash"></i><span class="ft">Start</span>
        <i class="slash"></i><span class="ft">Drawing1*</span>
        <span class="ft cur">Creación de superficies* <svg class="i12"><use href="#close"/></svg></span>
        <svg class="i18"><use href="#plus"/></svg>
        <i class="slash"></i>
    </nav>

    <!-- Layer and property toolbars -->
    <section class="toolbar">
        <div class="tb a">
            <svg class="i16"><use href="#t1"/></svg><svg class="i16"><use href="#t2"/></svg><svg class="i16"><use href="#t3"/></svg><svg class="i16"><use href="#t4"/></svg>
        </div>
        <div class="tb b"><svg class="i16"><use href="#lp"/></svg></div>
        <div class="combo layer"><svg class="i14"><use href="#bulbo"/></svg><svg class="i14"><use href="#suno"/></svg><svg class="i14"><use href="#vpo"/></svg><svg class="i14"><use href="#locko"/></svg><b class="swatch"></b><span>Curvas de nivel</span><i class="chev"></i></div>
        <div class="tb c"><svg class="i16"><use href="#lCur"/></svg><svg class="i16"><use href="#lPrev"/></svg><svg class="i16"><use href="#lSt"/></svg></div>
        <div class="grip"></div>
        <div class="combo color"><b class="swatch gray"></b><span>Color 253</span><i class="chev"></i></div>
        <div class="combo ltype"><hr><span>ByBlock</span><i class="chev"></i></div>
        <div class="combo lweight"><hr><span>0.13 mm</span><i class="chev"></i></div>
        <div class="combo pstyle"><span>ByColor</span><i class="chev"></i></div>
        <div class="tb d"><svg class="i16"><use href="#orb"/></svg><svg class="i16"><use href="#orb"/></svg><svg class="i16"><use href="#orb2"/></svg></div>
        <div class="tb e"><svg class="i16"><use href="#do1"/></svg><svg class="i16"><use href="#do2"/></svg><svg class="i16"><use href="#do3"/></svg><svg class="i16"><use href="#do4"/></svg></div>
        <div class="tb f"><svg class="i16"><use href="#t1"/></svg><svg class="i16"><use href="#do5"/></svg></div>
    </section>

    <!-- Work area -->
    <main class="work">
        <aside class="dock left">
            <div style="height:148px"><span>Drawing Recovery Man...</span></div>
            <div style="height:145px"><span>Layer Properties Mana...</span></div>
            <div style="height:147px"><span>Toolspace</span></div>
        </aside>
        <svg class="canvas" viewBox="23 197 1234 455">
            <g class="contour">
                <path d="M23 604L47 639 52 652M23 523.500L93 631 98 640 104 652M23 453.500L39.500 467 153 645 157 652"/>
                <path d="M23 310L95 396.500 106.500 406 155.500 490 245 626.500 281.500 644 318 652"/>
                <path d="M23 237L129.500 366.500 140.500 375.500 206.500 490 257.500 569.500 395 633.500 420 640"/>
                <path d="M51.500 197L166 338.500 174.500 346 258 490 270.500 512 420 582 508 623 530 628.500"/>
                <path d="M111 197L201.500 310.500 208.500 315.500 280 440 310.500 470.500 420 521 556.500 584 586.500 601 594 606.500 646 630"/>
                <path d="M230 197L246 220 270 249 276 255 297.500 293 390 387 435 407.500 473 430 625 515.500 665 548 836.500 625 866 637.500 924 652"/>
                <path d="M289.500 197L313 229.500 423 355 461 368.500 568 430 644 472 701.500 519.500 831.500 578 897 603 950.500 617 998 652"/>
                <path d="M345 197L392 263 450.500 329 551.500 366.500 663 429 736.500 490.500 828 531 921.500 567.500 960 577 1061 652"/>
                <path d="M401.500 197L471 295 478 303 644 365 680.500 385.500 734 430 772.500 462 850 494.500 946.500 531.500 970 538 1063 606.500 1116 652"/>
                <path d="M504 197L527 232.500 640 239.500 715.500 257.500 783 345.500 845.500 401.500 920 430 992.500 458 1004 476.500 1153 601.500 1231.500 638.500 1250 652"/>
                <path d="M551 197L618 201 727.500 227.500 731.500 232.500 844 332 885 369.500 1007 416.500 1035 461.500 1166.500 571 1257 613"/>
                <path d="M743 197L745 200 795 222 850 271.500 924 337.500 1021.500 375.500 1056 430 1066 445.500 1179 540 1257 577"/>
                <path d="M816.500 197L865.500 218.500 963 305.500 1036.500 333.500 1096.500 430.500 1193 510 1257 540"/>
                <path d="M974 197L1006.500 210 1026.500 229M1073 262L1158 399.500 1194 430 1218 450 1257 467"/>
                <path d="M1053 197L1080.500 208.500 1190 384 1233 419 1257 431M1117.500 197L1161.500 275 1220 368 1243 387.500 1257 394"/>
                <path d="M1162 197L1251.500 354 1257 358M1250.500 197L1257 207M585 311L690 318 701.500 333.500 690 332z"/>
            </g>
            <g class="contour index">
                <path d="M23 382.500L57 424 73.500 436.500 103 490 205 645 209 652"/>
                <path d="M170.500 197L237 281.500 241.500 285 289 366.500 349 427.500 420 461 483 490 606.500 558 630 577.500 744 629"/>
                <path d="M895 197L936.500 215 1001.500 273.500 1051.500 292.500 1127 415 1145 430 1205 480 1257 503M1206 197L1257 286"/>
            </g>
            <!-- crosshair -->
            <path class="cross" d="M844.500 197V477.500M844.500 502.500V652M23 489.500H832.500M857.500 489.500H1257M832.500 477.500h24v24h-24z"/>
            <!-- selected polyline -->
            <path class="glow" d="M460.500 203L502.500 268.500 663 278 703 287 793 403.500M820 437L978 497 999 513 1142 631 1190 655"/>
            <path class="sel" d="M460.500 203L502.500 268.500 663 278 703 287 793 403.500M820 437L978 497 999 513 1142 631 1190 655"/>
            <path class="thick" d="M663 278L703 287M775 407L810 434M963 495L990 502 1000 513"/>
            <g class="grips">
                <rect x="-13" y="-4" width="26" height="8" transform="translate(482 234.500) rotate(57)"/>
                <rect x="-14" y="-4" width="28" height="8" transform="translate(583 273) rotate(3)"/>
                <rect x="-13.500" y="-4" width="27" height="8" transform="translate(748 345.500) rotate(53)"/>
                <rect x="-14" y="-4" width="28" height="8" transform="translate(898 467) rotate(20)"/>
                <rect x="-14" y="-4" width="28" height="8" transform="translate(1070.500 572) rotate(40)"/>
                <rect x="-14" y="-4" width="28" height="8" transform="translate(1168 642.500) rotate(25)"/>
                <rect x="451" y="192" width="19" height="18.500"/>
                <rect x="493" y="259" width="19" height="19"/>
                <rect x="653" y="268.500" width="19" height="19"/>
                <rect x="693.500" y="278" width="19" height="19"/>
                <rect x="762" y="392.500" width="19" height="19"/>
                <rect x="783.500" y="394" width="19" height="19"/>
                <rect x="799.500" y="423" width="19" height="19"/>
                <rect x="810.500" y="427.500" width="19" height="19"/>
                <rect x="965.500" y="488.500" width="19" height="18"/>
                <rect x="970.500" y="489" width="18.500" height="18.500"/>
                <rect x="989.500" y="504" width="19" height="18.500"/>
                <rect x="1132.500" y="622" width="19" height="18.500"/>
            </g>
            <!-- UCS icon -->
            <path class="cross" d="M36.500 592V638.500H83M32.500 634.500h8v8h-8zM37.500 576l6 6 6-6M43.500 582v6M87 626l12 11M99 626L87 637"/>
            <!-- viewport buttons -->
            <g class="vpbtn">
                <rect x="1198.500" y="211.500" width="11" height="4"/>
                <rect x="1217.500" y="208.500" width="8" height="8"/><path d="M1219.500 208V206h9v9h-2"/><rect x="1220.500" y="211.500" width="2" height="2"/>
                <path d="M1236.500 206.500h3l1.500 2 1.500-2h3l-3 4.500 3 4.500h-3l-1.500-2-1.500 2h-3l3-4.500z"/>
            </g>
            <!-- view cube -->
            <rect class="vctop" x="1186.500" y="255.500" width="33" height="33"/>
            <g class="vc">
                <text x="1203" y="275.500" class="top">TOP</text>
                <text x="1203" y="241">N</text><text x="1203" y="312">S</text>
                <text x="1167" y="276">W</text><text x="1239" y="276">E</text>
                <rect x="1181" y="328" width="43" height="15"/>
                <text x="1195.500" y="339" class="wcs">WCS</text><path d="M1213 334.500h10"/>
            </g>
            <!-- navigation bar -->
            <g class="nav">
                <rect x="1222" y="367.500" width="31.500" height="201" rx="4"/>
                <circle cx="1238" cy="396" r="8"/><circle cx="1238" cy="396" r="3"/>
                <path d="M1233 414h11M1233 440c-3-8 0-9 2-4v-7l3 5v-7l3 7 4-5-1 12-4 5zM1230 466l14-12M1244 466l-12-12M1231 498h14M1238 490v18M1233 494h10v10h-10M1229 530h18M1229 536h18v12h-18z"/><circle cx="1235" cy="541" r="2"/>
            </g>
            <text class="vlabel" x="27" y="214">[−][Top][2D Wireframe]</text>
        </svg>
        <aside class="dock right"><div><span>Properties</span></div></aside>
        <div class="poi">
            <p>Poi...<b></b></p>
            <button>Iniciar</button>
        </div>
    </main>

    <!-- Status bar -->
    <footer class="status">
        <svg class="i18"><use href="#burger"/></svg>
        <span class="model">Model</span>
        <span class="layout">Presentación1</span>
        <i class="slash"></i><svg class="i18"><use href="#plus"/></svg><i class="slash"></i>
        <span class="coords">1555.3634, 1492.8720,</span>
        <div class="sb">
            <b style="width:33px"><svg class="i16"><use href="#osn"/></svg><i class="down"></i></b>
            <b class="on" style="width:22px"><svg class="i16"><use href="#cube"/></svg></b>
            <b style="width:17px"><i class="down"></i></b>
            <b class="on" style="width:22px"><svg class="i16"><use href="#ann1"/></svg></b>
            <b style="width:22px"><svg class="i16"><use href="#ann2"/></svg></b>
            <b style="width:23px"><svg class="i16"><use href="#ann"/></svg></b>
            <b style="width:33px">4:1<i class="down"></i></b>
            <b style="width:38px"><svg class="i16"><use href="#gear"/></svg><i class="down"></i></b>
            <b style="width:24px"><svg class="i18"><use href="#plus"/></svg></b>
            <b style="width:92px"><svg class="i16"><use href="#ruler"/></svg><em>Decimal</em><i class="down"></i></b>
            <b style="width:25px"><svg class="i16"><use href="#qp"/></svg></b>
            <b style="width:32px"><svg class="i16"><use href="#lui"/></svg><i class="down"></i></b>
            <b style="width:22px"><svg class="i18"><use href="#burger"/></svg></b>
        </div>
    </footer>

    <!-- Screen sharing notice -->
    <div class="sharing">
        <i class="bars"></i>
        <span>teams.live.com está compartiendo tu pantalla.</span>
        <button>Dejar de compartir</button>
        <a>Ocultar</a>
    </div>

    <!-- Windows taskbar -->
    <footer class="taskbar">
        <div class="apps">
            <span class="app"><svg class="i16"><use href="#win"/></svg></span>
            <span class="app"><svg class="i22"><use href="#wsearch"/></svg></span>
            <span class="app"><svg class="i16"><use href="#task"/></svg></span>
            <span class="app run"><svg class="i24"><use href="#edge"/></svg></span>
            <span class="app run"><svg class="i22"><use href="#folder"/></svg></span>
            <span class="app"><svg class="i24"><use href="#mail"/></svg></span>
            <span class="app run chr"><svg class="i26"><use href="#chrome"/></svg><em>L</em></span>
            <span class="app run xls"><svg class="i24"><use href="#excel"/></svg><em>X</em></span>
            <span class="app run front"><b class="acad">A<small>CAD</small></b></span>
            <span class="app run tms"><svg class="i26"><use href="#teams"/></svg><em>T</em></span>
            <span class="app run"><svg class="i22"><use href="#fist"/></svg></span>
            <span class="app run"><svg class="i26"><use href="#pointer"/></svg></span>
        </div>
        <div class="tray">
            <svg class="i24"><use href="#news"/></svg>
            <svg class="i16 ml16"><use href="#chev"/></svg>
            <svg class="i16"><use href="#cam"/></svg>
            <svg class="i16"><use href="#mic"/></svg>
            <svg class="i16"><use href="#bat"/></svg>
            <svg class="i16"><use href="#wifi"/></svg>
            <svg class="i16"><use href="#vol"/></svg>
            <div class="clock">20:53<br>06/01/2026</div>
            <span class="notif"><svg class="i24"><use href="#note"/></svg><em>1</em></span>
        </div>
    </footer>
</body>
</html>
```
FILE: styles.css
```css
* {
    box-sizing: border-box;
}
body {
    margin: 0;
    width: 1280px;
    height: 720px;
    overflow: hidden;
    position: relative;
    font-family: "Noto Sans", sans-serif;
    font-size: 10.6px;
    letter-spacing: -0.15px;
    color: #e2e5e8;
    background-color: #212932;
    white-space: nowrap;
}
p, h4 {
    margin: 0;
    font-weight: normal;
}
i, em {
    font-style: normal;
}
svg {
    flex: none;
    display: block;
}
.defs {
    display: none;
}
.ic { width: 22.400px; height: 20px; }
.i12 { width: 16px; height: 16px; }
.i14 { width: 15px; height: 15px; }
.i16 { width: 18px; height: 18px; }
.i18 { width: 18px; height: 18px; }
.i22 { width: 22px; height: 22px; }
.i24 { width: 24px; height: 24px; }
.i26 { width: 26px; height: 26px; }
.ml2 { margin-left: 2px; }
.ml6 { margin-left: 6px; }
.caret {
    flex: none;
    width: 5px;
    height: 3px;
    margin: 0 3px;
    background-color: #d5d9dd;
    clip-path: polygon(0 0, 100% 0, 50% 100%);
}
.down {
    flex: none;
    display: inline-block;
    width: 7px;
    height: 4px;
    margin-left: 6px;
    background-color: #d5d9dd;
    clip-path: polygon(0 0, 100% 0, 50% 100%);
}
h4 .down {
    vertical-align: 2px;
}
.swatch {
    width: 13px;
    height: 13px;
    background-color: #000;
    border: 1px solid #888;
}

/* title bar */
.titlebar {
    display: flex;
    align-items: center;
    height: 27px;
    padding-left: 14px;
    background-color: #222932;
}
.logo {
    width: 21px;
    height: 20px;
    margin: 0 1px 2px 0;
    border-radius: 2px;
    background: linear-gradient(90deg, #8f1568 0 15%, #d4108c 15%);
    color: #fff;
    font-weight: bold;
    font-size: 12px;
    line-height: 17px;
    padding-left: 3px;
    text-align: center;
}
.titlebar .caret { margin: 0 3px 0 4px; }
.titlebar .caret.dim { opacity: .5; }
.titlebar .caret.tight { margin: 0 2px; }
.titlebar .caret.bar {
    width: 8px;
    height: 7px;
    margin-left: 4px;
    clip-path: polygon(0 0, 100% 0, 100% 15%, 0 15%, 0 40%, 100% 40%, 50% 100%, 0 40%);
}
.workspace {
    display: flex;
    align-items: center;
    width: 166px;
    height: 18px;
    margin: 0 0 1px 0;
    padding-left: 1px;
    background-color: #3b4453;
}
.workspace span {
    flex: 1;
    margin-left: 2px;
    font-size: 10.900px;
}
.qa-on {
    width: 23px;
    height: 21px;
    padding: 1px 1.500px;
    border: 1px solid #65a9d0;
    background-color: #38536a;
}
.share {
    width: 47px;
    color: #9cc4e2;
    font-size: 11px;
}
.docname { width: 79px; font-size: 11.100px; }
.tri {
    width: 4px;
    height: 7px;
    margin-right: 7px;
    background-color: #e2e5e8;
    clip-path: polygon(0 0, 100% 50%, 0 100%);
}
.keyword {
    width: 167px;
    height: 18px;
    margin-bottom: 1px;
    padding-left: 3px;
    line-height: 18px;
    font-style: italic;
    font-size: 10.400px;
    color: #b7bcc3;
    background-color: #47505e;
}
.uname { width: 77px; font-size: 10.800px; }
.vsep {
    width: 1px;
    height: 16px;
    margin: 0 4px 0 6px;
    background-color: #454d57;
}
.winbtns {
    display: flex;
    gap: 20.600px;
    margin-left: auto;
    margin-right: 11px;
}

/* ribbon tabs */
.tabs {
    display: grid;
    grid-template-columns: 4px 48px 47px 63px 56px 56px 44px 57px 56px 51px 37px 75px 73px 75px 43px 57px 85px 88px 30px auto;
    align-items: center;
    height: 22px;
    color: #b6bbc1;
    text-align: center;
    font-size: 10.900px;
}
.tabs .active {
    grid-column: 2;
    margin-top: 3px;
    height: 19px;
    line-height: 17px;
    color: #e8eaec;
    background-color: #3b4453;
}
.pill {
    width: 15px;
    height: 9px;
    margin: 2px 0 0 20px;
    background-color: #555d67;
    border: 3px solid #fff;
    border-width: 3px 5px;
}
.tabs .caret { margin: 2px 0 0 8px; width: 5px; }

/* ribbon panels */
.ribbon {
    display: flex;
    height: 93px;
    background-color: #3b4453;
    border-bottom: 1px solid #454e5b;
}
.panel {
    display: flex;
    flex-direction: column;
    border-right: 1px solid #2b333e;
}
.panel .body {
    display: flex;
    height: 72px;
    padding-top: 4px;
}
.panel h4 {
    height: 20px;
    line-height: 21px;
    text-align: center;
    font-size: 10.800px;
}
.big {
    display: flex;
    flex-direction: column;
    align-items: center;
    text-align: center;
    line-height: 14px;
    border: 1px solid transparent;
    height: 68px;
    font-size: 10.800px;
}
.big svg { width: 32px; height: 32px; }
.big span { margin-top: 4px; }
.on {
    background-color: #3f5a72;
    border-color: #66a5cb;
}
.palettes { width: 107px; }
.palettes .body { padding-left: 4px; }
.palettes .big { width: 54px; }
.minis {
    display: grid;
    grid-template-columns: 22px 22px;
    grid-auto-rows: 21px;
    gap: 2px 1px;
    margin-left: 1px;
}
.minis b {
    padding: 0.500px 1px;
    border: 1px solid transparent;
}
.minis .on { border-color: #66a5cb; }
.explore { width: 50px; }
.explore .big, .optimize .big { width: 100%; }
.explore .big svg { width: 30px; height: 28px; margin-top: 2px; }
.explore .big span, .optimize .big span { margin-top: 6px; }
.optimize { width: 75px; }
.optimize .big svg { width: 30px; height: 22px; margin: 7px 0 1px; }
.panel .rows {
    display: flex;
    flex-direction: column;
    align-items: flex-start;
}
.rows p {
    display: flex;
    align-items: center;
    height: 22.500px;
    font-size: 10.900px;
}
.rows svg { margin-right: 3px; }
.rows .caret { margin-left: 6px; }
.rows .bare .caret { margin-left: 2px; }
.ground { width: 121px; }
.ground .rows { padding-left: 24px; }
.design { width: 218px; }
.design .rows:nth-child(1) { margin-left: 5px; width: 99px; }
.design .rows:nth-child(2) { width: 81px; }
.design .rows:nth-child(3) .caret { margin-left: 0; }
.views { width: 125px; }
.views .rows { padding-left: 47px; }
.views .rows .caret { margin-left: 1px; }
.body.icons {
    display: grid;
    grid-auto-rows: 22.500px;
}
.icons p {
    display: flex;
    align-items: center;
}
.icons .caret { margin: 0 0 0 3px; }
.draw { width: 111px; }
.draw .icons { grid-template-columns: 35.500px 36.500px 32px; padding-left: 6px; }
.modify { width: 124px; }
.modify .icons { grid-template-columns: 28px 28px 38px 20px; padding-left: 4px; }
.layers { width: 256px; }
.layers .body { padding-left: 2px; }
.layers .big { width: 56px; }
.layers .big svg { height: 32px; }
.laycol { padding: 1px 0 0 3px; }
.laycombo {
    display: flex;
    align-items: center;
    width: 193px;
    height: 20px;
    padding: 0 2px 0 1px;
    gap: 3px;
    border: 1px solid #566171;
    background-color: #47505f;
    font-size: 10.900px;
}
.laycombo .swatch { border-color: #fff; margin: 0 2px 0 1px; }
.laycombo span { flex: 1; }
.laycombo .caret { margin: 0; width: 7px; height: 4px; }
.layicons {
    display: grid;
    grid-template-columns: repeat(5, 22.300px);
    grid-auto-rows: 22.500px;
    align-items: center;
    padding: 1px 0 0 1px;
}
.clip { width: 93px; border-right: 0; }
.clip .body { padding-left: 10px; }
.clip h4 { padding-right: 8px; }
.clip .big { width: 31px; margin-right: 12px; }
.clip .big svg { width: 28px; }
.clip .big .caret { margin-top: 4px; }
.clip .rows svg { margin-right: 1px; }

/* drawing tabs */
.filetabs {
    display: flex;
    align-items: center;
    height: 25px;
    padding-left: 13px;
    background-color: #212932;
    font-size: 10.800px;
}
.slash {
    flex: none;
    width: 1px;
    height: 14px;
    background-color: #515a65;
    transform: rotate(20deg);
}
.filetabs .slash { margin: 0 11px; }
.filetabs .slash + .ft { width: 23px; }
.filetabs .ft:nth-of-type(2) { width: 68px; }
.filetabs .ft.cur {
    display: flex;
    align-items: center;
    width: 169px;
    height: 25px;
    padding-left: 16px;
    font-weight: bold;
    font-size: 10.700px;
    letter-spacing: -0.2px;
    background-color: #3b4453;
    clip-path: polygon(8px 0, 100% 0, 163px 100%, 0 100%);
}
.cur svg { margin-left: 5px; opacity: .8; }
.filetabs .cur + svg { margin-left: 5px; }

/* toolbars */
.toolbar {
    display: flex;
    align-items: center;
    height: 30px;
    padding-bottom: 1px;
    background-color: #3b4453;
    border-bottom: 1px solid #2f3843;
}
.tb {
    display: flex;
    align-items: center;
    height: 21px;
    gap: 3.700px;
    background-color: #333c49;
}
.tb.a, .tb.b, .tb.d, .tb.e {
    border-left: 3px dotted #6a7380;
    margin-left: 3px;
}
.tb.a { width: 92px; padding-left: 4px; }
.tb.b { width: 28px; padding-left: 5px; }
.tb.c { width: 66px; padding-left: 2px; }
.tb.d { width: 70px; padding-left: 4px; }
.tb.e { width: 94px; padding-left: 5px; border-right: 1px solid #65707c; }
.tb.f { width: 45px; padding-left: 4px; }
.grip {
    width: 3px;
    height: 16px;
    margin: 0 4px 0 2px;
    border-left: 3px dotted #6a7380;
}
.combo {
    display: flex;
    align-items: center;
    height: 21px;
    padding: 0 6px 0 4px;
    margin-right: 5px;
    color: #222;
    background-color: #e3e4e2;
    font-size: 10.900px;
}
.combo span { flex: 1; }
.combo hr {
    height: 1px;
    margin: 0 5px 0 0;
    border: 0;
    background-color: #111;
}
.chev {
    width: 6px;
    height: 6px;
    margin-bottom: 3px;
    border-right: 1px solid #444;
    border-bottom: 1px solid #444;
    transform: rotate(45deg);
}
.combo.layer { width: 280px; gap: 3px; margin: 0; }
.combo.layer svg:nth-child(3) { margin-left: 2px; }
.combo.layer .swatch { margin-right: 1px; margin-left: -2px; }
.combo.color { width: 141px; }
.combo .gray { background-color: #888; margin-right: 4px; }
.combo.ltype { width: 150px; }
.ltype hr { width: 57px; }
.combo.lweight { width: 118px; }
.lweight hr { width: 33px; }
.combo.pstyle {
    width: 112px;
    margin-right: 0;
    padding-left: 9px;
    color: #8a8a8a;
    background-color: #cacaca;
}
.pstyle .chev { border-color: #aaa; }

/* work area */
.work {
    display: flex;
    position: relative;
    height: 455px;
}
.dock {
    width: 23px;
    background-color: #2a323d;
}
.dock div {
    display: flex;
    align-items: center;
    justify-content: center;
    margin: 4px 1px 0 1px;
    background-color: #3b4453;
    border: 1px solid #465160;
}
.dock div::before {
    content: "";
    align-self: flex-start;
    width: 9px;
    height: 4px;
    margin: 3px -9px 0 0;
    border: 1px dotted #9aa2ac;
    border-width: 1px 0;
}
.dock span {
    writing-mode: vertical-rl;
    transform: rotate(180deg);
    font-size: 10.900px;
    letter-spacing: -0.25px;
    color: #d6dade;
}
.dock.left div:nth-child(1) span { margin-top: 2px; }
.dock.left div:nth-child(2) span { margin-top: 6px; }
.dock.right div { height: 448px; }
.canvas {
    width: 1234px;
    height: 455px;
    background-color: #fdfdfd;
}
.contour {
    fill: none;
    stroke: #303030;
    stroke-width: 1.100;
}
.contour.index { stroke: #a2a2a2; }
.cross {
    fill: none;
    stroke: #2b2b2b;
}
.glow {
    fill: none;
    stroke: #d3def5;
    stroke-width: 5;
}
.sel {
    fill: none;
    stroke: #7f93d0;
    stroke-width: 2.200;
}
.thick {
    fill: none;
    stroke: #0a7bef;
    stroke-width: 7;
}
.grips rect {
    fill: #027fff;
    stroke: #15406f;
}
.vpbtn rect, .vpbtn path {
    fill: #fff;
    stroke: #666;
}
.vctop {
    fill: #e3e6e6;
    fill-opacity: .8;
    stroke: #8d8d8d;
}
.vc text {
    font-size: 12px;
    font-weight: bold;
    letter-spacing: 0;
    text-anchor: middle;
    fill: #f0f0f0;
    stroke: #bdbdbd;
    stroke-width: .6;
}
.vc text.top {
    font-size: 8px;
    font-weight: normal;
    fill: #666;
    stroke: none;
}
.vc text.wcs {
    font-size: 10.500px;
    fill: #b5b5b5;
    stroke: none;
}
.vc rect { fill: #eee; opacity: .5; }
.vc path { stroke: #ccc; }
.nav {
    fill: none;
    stroke: #dadada;
}
.nav rect {
    fill: #eee;
    fill-opacity: .55;
    stroke: #c4c4c4;
}
.vlabel {
    fill: #333;
    font-size: 11px;
}
.poi {
    position: absolute;
    left: 1024px;
    top: 34px;
    width: 48px;
    background-color: #fdfdfd;
    color: #999;
}
.poi p {
    display: flex;
    justify-content: space-between;
    height: 19px;
    padding-left: 3px;
    line-height: 19px;
}
.poi b {
    width: 18px;
    height: 18px;
    background-color: #e6e4e8;
}
.poi button {
    display: block;
    width: 47px;
    height: 23px;
    margin: 4px 0 0 1px;
    padding: 0;
    border: 2px solid #1d74b5;
    background-color: #e1e1e1;
    color: #222;
    font: 12px "Liberation Sans", sans-serif;
}

/* status bar */
.status {
    display: flex;
    align-items: center;
    height: 32px;
    padding-left: 13px;
    padding-bottom: 3px;
    background-color: #212932;
    border-top: 3px solid #3b4453;
    border-bottom: 2px solid #18202a;
    font-size: 10.700px;
}
.model {
    width: 64px;
    height: 21px;
    margin: 0 7px 0 8px;
    line-height: 21px;
    text-align: center;
    font-weight: bold;
    background-color: #3b4453;
    clip-path: polygon(8px 0, 100% 0, 56px 100%, 0 100%);
}
.layout { width: 80px; }
.status > .slash { margin: 0; }
.status > .slash + svg { margin: 0 10px; }
.coords {
    width: 579px;
    height: 22px;
    margin-left: 57px;
    padding-left: 11px;
    line-height: 22px;
    font-size: 10.900px;
    background-color: #343d4a;
}
.sb {
    display: flex;
    height: 22px;
    margin-left: -4px;
    background-color: #2b343f;
}
.sb b {
    display: flex;
    align-items: center;
    justify-content: center;
    font-weight: normal;
    background-color: #343d4a;
    margin-right: 1px;
}
.sb .on { background-color: #4d80ab; }
.sb .down { width: 6px; margin-left: 5px; }
.sb em { margin: 0 8px 0 11px; }

/* screen sharing notice */
.sharing {
    position: absolute;
    left: 414px;
    top: 629px;
    width: 453px;
    height: 46px;
    display: flex;
    align-items: center;
    padding-left: 9px;
    background-color: #fff;
    box-shadow: 0 0 2px rgba(0, 0, 0, .4);
    color: #3c3c3c;
    font-size: 10.900px;
}
.bars {
    width: 6px;
    height: 10px;
    margin-right: 10px;
    border: 1px solid #aaa;
    border-width: 0 1.500px;
}
.sharing span {
    width: 237px;
    letter-spacing: -0.2px;
}
.sharing button {
    width: 135px;
    height: 35px;
    padding: 0;
    border: 0;
    border-radius: 18px;
    background-color: #0b57d0;
    color: #fff;
    font: bold 11.600px "Noto Sans", sans-serif;
    letter-spacing: -0.2px;
}
.sharing a {
    margin-left: 9px;
    color: #1b5fb8;
    text-decoration: underline;
}

/* taskbar */
.taskbar {
    display: flex;
    justify-content: space-between;
    height: 36px;
    background-color: #eeeeee;
    color: #222;
}
.apps {
    display: flex;
}
.app {
    position: relative;
    display: flex;
    align-items: center;
    justify-content: center;
    width: 46px;
    height: 36px;
}
.app:first-child { width: 45px; }
.app.run::after {
    content: "";
    position: absolute;
    left: 5px;
    right: 4px;
    bottom: 0;
    height: 2px;
    background-color: #1173bd;
}
.app.front {
    background-color: #f9f9f9;
}
.app.front::after { left: 2px; right: 2px; }
.app em {
    position: absolute;
    color: #fff;
    font-size: 8px;
    line-height: 10px;
}
.chr em { left: 27px; top: 18px; }
.xls em { left: 14px; top: 13px; font-weight: bold; font-size: 9px; }
.tms em { left: 14px; top: 15px; font-weight: bold; }
.acad {
    width: 20px;
    height: 22px;
    border-radius: 2px;
    background: linear-gradient(#e3164c 0 70%, #8c0f2f 70%);
    color: #fff;
    font-size: 12px;
    line-height: 15px;
    text-align: center;
}
.acad small {
    display: block;
    font-size: 5px;
    line-height: 6px;
}
.tray {
    display: flex;
    align-items: center;
    padding-right: 15px;
    gap: 4.300px;
}
.tray .ml16 { margin-left: 12px; }
.clock {
    width: 56px;
    margin: 0 7px 0 4px;
    text-align: center;
    line-height: 17px;
    font-size: 10.500px;
    letter-spacing: -0.2px;
}
.notif { position: relative; }
.notif em {
    position: absolute;
    left: 13px;
    top: 10px;
    font-size: 9px;
    line-height: 12px;
}
```
